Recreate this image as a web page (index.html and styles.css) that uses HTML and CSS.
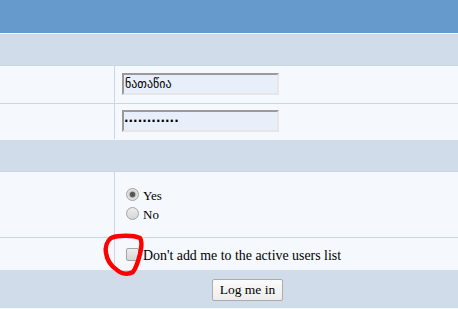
FILE: index.html
```html
<!DOCTYPE html>
<html lang="en">
<head>
<meta charset="utf-8">
<title>Log in</title>
<link rel="stylesheet" href="styles.css">
</head>
<body>
<div class="header"></div>
<div class="bar"></div>
<div class="row row-user">
  <div class="label"></div>
  <div class="field"><input class="text-input" type="text" value="ნათაწია" aria-label="Username"></div>
</div>
<div class="row row-pass">
  <div class="label"></div>
  <div class="field"><input class="text-input pass" type="text" value="············" aria-label="Password"></div>
</div>
<div class="bar"></div>
<div class="row row-radio">
  <div class="label"></div>
  <div class="field">
    <label class="option"><input class="radio" type="radio" name="stay" checked><span class="opt-text">Yes</span></label>
    <label class="option"><input class="radio" type="radio" name="stay"><span class="opt-text">No</span></label>
  </div>
</div>
<div class="row row-check">
  <div class="label"></div>
  <div class="field">
    <label class="option check-option"><input class="check" type="checkbox"><span class="opt-text">Don't add me to the active users list</span></label>
  </div>
</div>
<div class="footer"><button class="btn" type="button">Log me in</button></div>
<svg class="mark" width="458" height="309" viewBox="0 0 458 309" aria-hidden="true">
  <path d="M111,238 C118,235 134,235 140,238 C143,242 141,249 140,254 C138,262 136,268 133,272 C128,275 121,274 117,270 C111,266 107,260 106,253 C105,247 107,241 111,238 Z" fill="none" stroke="#ff0000" stroke-width="4.5" stroke-linecap="round" stroke-linejoin="round"/>
</svg>
</body>
</html>
```
FILE: styles.css
```css
html, body {
  margin: 0;
  padding: 0;
}
body {
  width: 458px;
  height: 309px;
  overflow: hidden;
  position: relative;
  background: #f5f8fd;
  font-family: "Liberation Serif", "Times New Roman", serif;
  color: #000;
}
.header {
  height: 33px;
  background: #6699cc;
  border-bottom: 1px solid #ffffff;
}
.bar {
  height: 31px;
  background: #d1dceb;
  border-bottom: 1px solid #c9d6e4;
}
.row {
  display: grid;
  grid-template-columns: 114px 1fr;
  background: #f5f8fd;
  border-bottom: 1px solid #c9d6e4;
}
.field {
  border-left: 1px solid #c9d6e4;
  padding-left: 7px;
}
.row-user .field {
  padding-top: 7px;
  padding-bottom: 8px;
}
.row-pass {
  border-bottom-color: #f5f8fd;
}
.row-pass .field {
  padding-top: 6px;
  padding-bottom: 7px;
}
.row-radio .field {
  padding-top: 13px;
  padding-bottom: 14px;
}
.row-check {
  border-bottom: none;
}
.row-check .field {
  height: 32px;
  display: flex;
  align-items: center;
}
.text-input {
  display: block;
  box-sizing: border-box;
  width: 157px;
  height: 22px;
  margin: 0;
  padding: 0 0 0 1px;
  background: #e8effb;
  border-style: solid;
  border-width: 2px;
  border-color: #9a9a9a #e6e6e6 #e6e6e6 #9a9a9a;
  font-family: "DejaVu Sans", "Noto Sans", sans-serif;
  font-size: 12px;
  color: #000;
  outline: none;
}
.text-input.pass {
  font-weight: bold;
  padding-left: 0;
}
.option {
  display: flex;
  align-items: center;
  height: 19px;
  font-size: 13px;
}
.check-option {
  font-size: 13.9px;
}
.opt-text {
  padding-top: 3px;
}
.radio, .check {
  appearance: none;
  -webkit-appearance: none;
  box-sizing: border-box;
  width: 13px;
  height: 13px;
  margin: 0 4px 0 4px;
  border: 1px solid #a3a3a3;
  background: linear-gradient(#ececec, #d6d6d6);
  flex: none;
}
.radio {
  border-radius: 50%;
}
.radio:checked {
  background: radial-gradient(circle at center, #505050 0, #5a5a5a 2.4px, #c4c4c4 3.2px, #e2e2e2 4.5px);
}
.check {
  border-radius: 2px;
}
.footer {
  height: 38px;
  background: #d1dceb;
  display: flex;
  justify-content: center;
  align-items: flex-start;
  padding-left: 37px;
  padding-top: 9px;
  box-sizing: border-box;
}
.btn {
  box-sizing: border-box;
  width: 71px;
  height: 22px;
  margin: 0;
  padding: 0;
  border: 1px solid #acacac;
  border-radius: 2px;
  background: linear-gradient(#fbfbfb, #ededed);
  font-family: "Liberation Serif", "Times New Roman", serif;
  font-size: 13.5px;
  color: #000;
}
.mark {
  position: absolute;
  top: 0;
  left: 0;
  pointer-events: none;
}
```
